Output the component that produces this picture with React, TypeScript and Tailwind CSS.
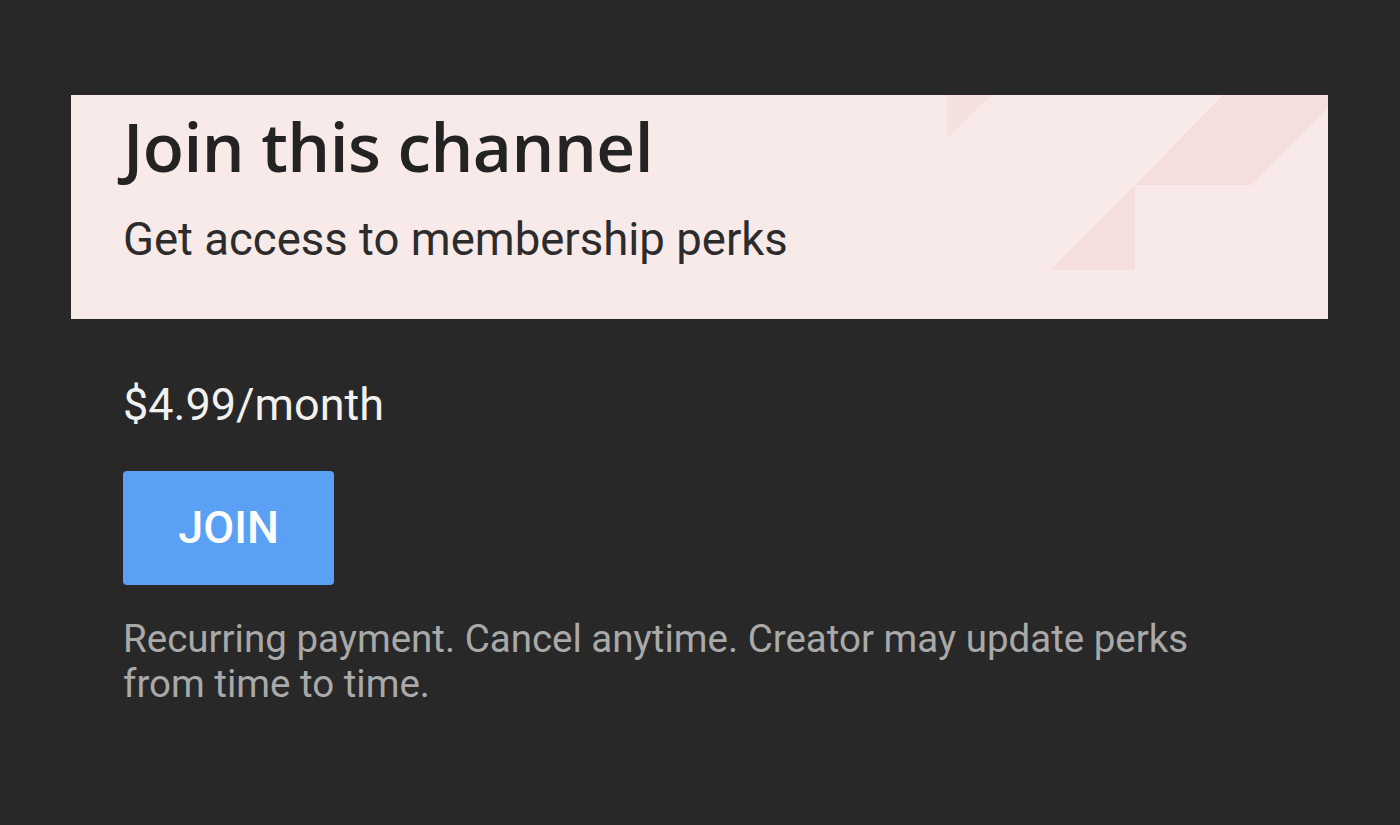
export default function App() {
  return (
    <div className="w-[1400px] h-[825px] bg-[#282828] overflow-hidden" style={{ fontFamily: 'Roboto, "Liberation Sans", sans-serif' }}>
      <div className="pt-[95px] pl-[71px]">
        <div className="relative w-[1257px] h-[224px] bg-[#f8eae8] overflow-hidden pl-[52px]">
          <svg className="absolute inset-0" width="1257" height="224" viewBox="71 95 1257 224">
            <polygon points="947,95 992,95 947,138" fill="#f4e0dd" />
            <polygon points="1223,95 1328,95 1328,108 1252,185 1135,185" fill="#f4dfdc" />
            <polygon points="1135,185 1135,270 1050,270" fill="#f4dfdc" />
          </svg>
          <h1 className="relative pt-[7px] text-[67.5px] leading-[88px] font-semibold text-[#232323] tracking-[-0.5px]" style={{ fontFamily: '"Open Sans", "Noto Sans", sans-serif' }}>
            Join this channel
          </h1>
          <p className="relative mt-[22px] text-[45.5px] leading-[56px] text-[#2c2c2c]">Get access to membership perks</p>
        </div>
      </div>
      <div className="px-[123px]">
        <div className="mt-[58px] text-[45px] leading-[56px] text-[#f1f1f1]">$4.99/month</div>
        <button className="mt-[38px] w-[211px] h-[114px] rounded-[4px] bg-[#5aa1f6] text-white text-[45px] font-medium flex items-center justify-center">
          JOIN
        </button>
        <p className="mt-[31px] w-[1120px] text-[38.5px] leading-[45px] text-[#a9a9a9]">
          Recurring payment. Cancel anytime. Creator may update perks from time to time.
        </p>
      </div>
    </div>
  )
}
